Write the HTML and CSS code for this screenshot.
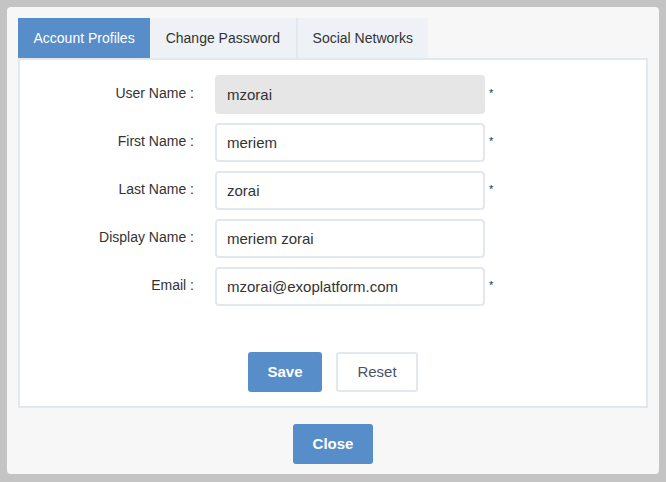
FILE: index.html
```html
<!DOCTYPE html>
<html>
<head>
<meta charset="utf-8">
<link rel="stylesheet" href="styles.css">
</head>
<body>
<div class="dialog">
  <div class="tabs">
    <div class="tab active">Account Profiles</div>
    <div class="tab">Change Password</div>
    <div class="tab sep">Social Networks</div>
  </div>
  <div class="panel">
    <div class="form">
      <div class="row">
        <label class="label">User Name :</label>
        <input class="field disabled" type="text" value="mzorai" readonly>
        <span class="req">*</span>
      </div>
      <div class="row">
        <label class="label">First Name :</label>
        <input class="field" type="text" value="meriem">
        <span class="req">*</span>
      </div>
      <div class="row">
        <label class="label">Last Name :</label>
        <input class="field" type="text" value="zorai">
        <span class="req">*</span>
      </div>
      <div class="row">
        <label class="label">Display Name :</label>
        <input class="field" type="text" value="meriem zorai">
      </div>
      <div class="row">
        <label class="label">Email :</label>
        <input class="field" type="text" value="mzorai@exoplatform.com">
        <span class="req">*</span>
      </div>
    </div>
    <div class="actions">
      <button class="btn primary save">Save</button>
      <button class="btn secondary reset">Reset</button>
    </div>
  </div>
  <div class="footer">
    <button class="btn primary close">Close</button>
  </div>
</div>
</body>
</html>
```
FILE: styles.css
```css
html, body {
  margin: 0;
  padding: 0;
}
body {
  background: #c4c4c4;
  font-family: "Liberation Sans", Arial, sans-serif;
  font-size: 14px;
  color: #333;
  width: 666px;
  height: 482px;
  overflow: hidden;
}
.dialog {
  margin: 7px 0 0 7px;
  width: 652px;
  height: 467px;
  box-sizing: border-box;
  background: #f7f7f7;
  border-radius: 4px;
  padding: 11px 11px 10px 11px;
  display: flex;
  flex-direction: column;
}
.tabs {
  display: flex;
  height: 40px;
}
.tab {
  height: 40px;
  line-height: 40px;
  padding: 0 15.5px;
  background: #eef2f6;
  color: #333;
  white-space: nowrap;
}
.tab.active {
  background: #578dc9;
  color: #fff;
}
.tab.sep {
  border-left: 2px solid #e1e8ee;
  padding: 0 15px;
}
.panel {
  background: #fff;
  border: 2px solid #e1e8ee;
  height: 350px;
  box-sizing: border-box;
  padding-top: 15px;
  display: flex;
  flex-direction: column;
}
.form {
  display: flex;
  flex-direction: column;
  gap: 9px;
}
.row {
  display: flex;
  align-items: center;
  height: 39px;
}
.label {
  width: 174px;
  text-align: right;
  margin-right: 21px;
  color: #333;
  position: relative;
  top: -2px;
}
.field {
  width: 270px;
  height: 39px;
  box-sizing: border-box;
  border: 2px solid #e3e8ee;
  border-radius: 4px;
  padding: 0 10px;
  font-family: "Liberation Sans", Arial, sans-serif;
  font-size: 15px;
  color: #333;
  background: #fff;
  outline: none;
}
.field.disabled {
  background: #e6e6e6;
  border-color: #e6e6e6;
}
.req {
  margin-left: 4px;
  font-size: 11px;
  align-self: flex-start;
  margin-top: 12px;
  color: #333;
}
.actions {
  display: flex;
  justify-content: center;
  gap: 14px;
  margin-top: 46px;
}
.btn {
  height: 40px;
  box-sizing: border-box;
  border-radius: 3px;
  font-family: "Liberation Sans", Arial, sans-serif;
  font-size: 15px;
  cursor: pointer;
  padding: 0 0 2px 0;
}
.primary {
  background: #578dc9;
  border: none;
  color: #fff;
  font-weight: bold;
}
.secondary {
  background: #fff;
  border: 2px solid #e3e8ee;
  color: #4d5466;
}
.save { width: 74px; }
.reset { width: 82px; }
.close { width: 80px; }
.footer {
  display: flex;
  justify-content: center;
  margin-top: 16px;
}
```
